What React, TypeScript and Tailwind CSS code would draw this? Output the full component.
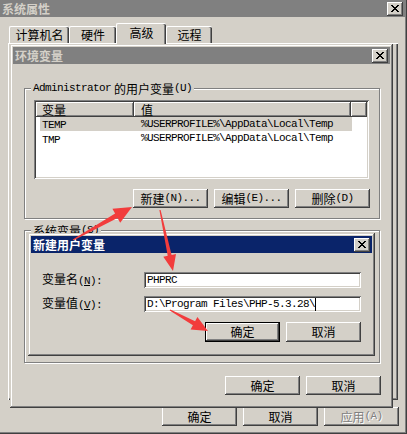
import React from 'react';

// classic 3D edges
const raised =
  'shadow-[inset_-1px_-1px_#404040,inset_1px_1px_#ffffff,inset_-2px_-2px_#808080,inset_2px_2px_#d4d0c8]';
const sunken =
  'shadow-[inset_1px_1px_#808080,inset_-1px_-1px_#ffffff,inset_2px_2px_#404040,inset_-2px_-2px_#d4d0c8]';
const frame =
  'shadow-[inset_-1px_-1px_#404040,inset_1px_1px_#d4d0c8,inset_-2px_-2px_#808080,inset_2px_2px_#ffffff]';

function M({ children }: { children: React.ReactNode }) {
  return (
    <span className="font-['Liberation_Mono',monospace] text-[11px] tracking-[-0.6px]">{children}</span>
  );
}

function CloseBtn() {
  const cells = [
    [0, 0, 2], [6, 0, 2],
    [1, 1, 2], [5, 1, 2],
    [2, 2, 4],
    [3, 3, 2],
    [2, 4, 4],
    [1, 5, 2], [5, 5, 2],
    [0, 6, 2], [6, 6, 2],
  ];
  return (
    <div className={`w-[16px] h-[14px] bg-[#d4d0c8] flex items-center justify-center ${raised}`}>
      <svg width="8" height="7" viewBox="0 0 8 7" shapeRendering="crispEdges" className="ml-[-1px] mt-[-1px]">
        {cells.map(([x, y, w], i) => (
          <rect key={i} x={x} y={y} width={w} height={1} fill="#000" />
        ))}
      </svg>
    </div>
  );
}

function TitleBar({ title, active }: { title: string; active?: boolean }) {
  return (
    <div
      className={`h-[17px] shrink-0 flex items-center justify-between pl-[2px] pr-[2px] ${
        active ? 'bg-[#0a246a] text-white' : 'bg-[#808080] text-[#d4d0c8]'
      }`}
    >
      <span className="font-bold text-[12px]">{title}</span>
      <CloseBtn />
    </div>
  );
}

function Btn({
  children,
  className = 'h-[19px]',
  isDefault,
  disabled,
}: {
  children: React.ReactNode;
  className?: string;
  isDefault?: boolean;
  disabled?: boolean;
}) {
  const face = (
    <div
      className={`w-full h-full flex items-center justify-center bg-[#d4d0c8] ${raised} ${
        disabled ? 'text-[#808080] [text-shadow:1px_1px_0_#ffffff]' : ''
      }`}
    >
      {children}
    </div>
  );
  if (isDefault) {
    return <div className={`w-[75px] border border-black ${className}`}>{face}</div>;
  }
  return <div className={`w-[75px] ${className}`}>{face}</div>;
}

function GroupBox({
  label,
  className,
  children,
}: {
  label: React.ReactNode;
  className: string;
  children?: React.ReactNode;
}) {
  return (
    <div
      className={`relative border border-[#808080] shadow-[inset_1px_1px_#ffffff,1px_1px_#ffffff] ${className}`}
    >
      <div className="absolute left-[6px] -top-[7px] px-[2px] bg-[#d4d0c8] h-[13px] flex items-center">
        {label}
      </div>
      {children}
    </div>
  );
}

function Tab({ label, selected, w }: { label: string; selected?: boolean; w: string }) {
  return (
    <div
      className={`${w} ${
        selected ? 'h-[21px] -mb-px z-10 pb-[3px]' : 'h-[17px]'
      } relative bg-[#d4d0c8] border-t border-l border-white rounded-tl-[2px] rounded-tr-[2px] shadow-[inset_-1px_0_#404040,inset_-2px_0_#808080] flex items-center justify-center`}
    >
      {label}
    </div>
  );
}

function arrowPoints(
  tx: number,
  ty: number,
  hx: number,
  hy: number,
  headLen: number,
  headW: number,
  neckW: number,
  tailW: number
) {
  const dx = hx - tx;
  const dy = hy - ty;
  const len = Math.hypot(dx, dy);
  const ux = dx / len;
  const uy = dy / len;
  const nx = -uy;
  const ny = ux;
  const bx = hx - ux * headLen;
  const by = hy - uy * headLen;
  const pts = [
    [tx + nx * tailW, ty + ny * tailW],
    [bx + nx * neckW, by + ny * neckW],
    [bx + nx * headW, by + ny * headW],
    [hx, hy],
    [bx - nx * headW, by - ny * headW],
    [bx - nx * neckW, by - ny * neckW],
    [tx - nx * tailW, ty - ny * tailW],
  ];
  return pts.map(([x, y]) => `${x.toFixed(1)},${y.toFixed(1)}`).join(' ');
}

const arrows = [
  arrowPoints(73, 240, 132, 207, 18, 8, 2.5, 0.6),
  arrowPoints(160, 210, 173, 271, 16, 6.5, 2, 0.6),
  arrowPoints(170, 310, 208, 331, 16, 7, 2.2, 0.6),
];

export default function App() {
  return (
    <div className="relative w-[407px] h-[434px] overflow-hidden bg-[#d4d0c8] font-['Noto_Sans_CJK_SC',sans-serif] text-[12px] text-black leading-none">
      {/* 系统属性 */}
      <div className="flex flex-col h-full pr-[2px] pb-[2px] shadow-[inset_-1px_-1px_#404040,inset_-2px_-2px_#808080]">
        <TitleBar title="系统属性" />
        <div className="mt-[6px] pl-[9px] h-[20px] flex items-end">
          <Tab label="计算机名" w="w-[60px]" />
          <Tab label="硬件" w="w-[47px]" />
          <Tab label="高级" w="w-[50px]" selected />
          <Tab label="远程" w="w-[46px]" />
        </div>
        <div className="ml-[8px] w-[390px] h-[357px] border-t border-l border-white shadow-[inset_-1px_-1px_#404040,inset_-2px_-2px_#808080]" />
        <div className="mt-[7px] pr-[6px] flex justify-end gap-[6px]">
          <Btn>确定</Btn>
          <Btn>取消</Btn>
          <Btn disabled>
            应用<M>(A)</M>
          </Btn>
        </div>
      </div>

      {/* 环境变量 */}
      <div className={`absolute left-[10px] top-[44px] w-[383px] h-[364px] bg-[#d4d0c8] p-[3px] flex flex-col ${frame}`}>
        <TitleBar title="环境变量" />
        <GroupBox
          className="mt-[24px] ml-[11px] w-[356px] h-[131px] pt-[11px] pl-[9px]"
          label={
            <>
              <M>Administrator </M>
              <span className="ml-[3px]">的用户变量</span>
              <M>(U)</M>
            </>
          }
        >
          <div className={`w-[335px] h-[79px] bg-white p-[2px] flex flex-col ${sunken}`}>
            <div className="flex h-[15px] shrink-0">
              <div className={`w-[98px] bg-[#d4d0c8] pl-[6px] flex items-center ${raised}`}>变量</div>
              <div className={`w-[217px] bg-[#d4d0c8] pl-[7px] flex items-center ${raised}`}>值</div>
              <div className={`flex-1 bg-[#d4d0c8] ${raised}`} />
            </div>
            <div className="ml-[4px] w-[312px] h-[14px] bg-[#d4d0c8] pl-[2px] flex items-center">
              <span className="w-[99px]">
                <M>TEMP</M>
              </span>
              <M>%USERPROFILE%\AppData\Local\Temp</M>
            </div>
            <div className="ml-[4px] w-[312px] h-[15px] pl-[2px] flex items-center">
              <span className="w-[99px]">
                <M>TMP</M>
              </span>
              <M>%USERPROFILE%\AppData\Local\Temp</M>
            </div>
          </div>
          <div className="mt-[10px] pr-[9px] flex justify-end gap-[6px]">
            <Btn>
              新建<M>(N)...</M>
            </Btn>
            <Btn>
              编辑<M>(E)...</M>
            </Btn>
            <Btn>
              删除<M>(D)</M>
            </Btn>
          </div>
        </GroupBox>
        <GroupBox
          className="mt-[11px] ml-[11px] w-[356px] h-[133px] shrink-0"
          label={
            <>
              系统变量<M>(S)</M>
            </>
          }
        />
        <div className="mt-[13px] pr-[9px] flex justify-end gap-[6px]">
          <Btn>确定</Btn>
          <Btn>取消</Btn>
        </div>
      </div>

      {/* 新建用户变量 */}
      <div className={`absolute left-[28px] top-[233px] w-[347px] h-[123px] bg-[#d4d0c8] p-[3px] flex flex-col ${frame}`}>
        <TitleBar title="新建用户变量" active />
        <div className="mt-[19px] h-[16px] flex items-center">
          <div className="w-[113px] pl-[11px]">
            变量名
            <M>
              (<span className="underline">N</span>):
            </M>
          </div>
          <div className={`w-[217px] h-[16px] bg-white pl-[3px] flex items-center ${sunken}`}>
            <M>PHPRC</M>
          </div>
        </div>
        <div className="mt-[8px] h-[16px] flex items-center">
          <div className="w-[113px] pl-[11px]">
            变量值
            <M>
              (<span className="underline">V</span>):
            </M>
          </div>
          <div className={`w-[217px] h-[16px] bg-white pl-[3px] flex items-center ${sunken}`}>
            <M>D:\Program Files\PHP-5.3.28\</M>
            <span className="w-px h-[13px] bg-black" />
          </div>
        </div>
        <div className="mt-[10px] pr-[11px] flex justify-end gap-[6px]">
          <Btn isDefault className="h-[20px]">
            确定
          </Btn>
          <Btn className="h-[20px]">取消</Btn>
        </div>
      </div>

      {/* red annotation arrows */}
      <svg className="absolute inset-0 pointer-events-none" width="407" height="434" viewBox="0 0 407 434">
        {arrows.map((p, i) => (
          <polygon key={i} points={p} fill="#f23c3c" />
        ))}
      </svg>
    </div>
  );
}
